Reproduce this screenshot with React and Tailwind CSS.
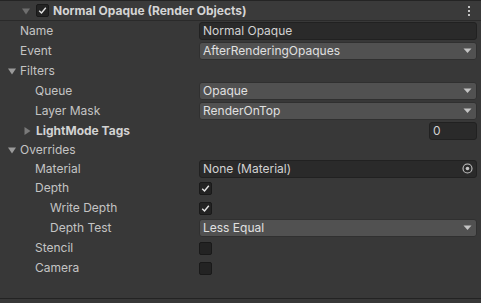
const font = { fontFamily: "Inter, 'Noto Sans', sans-serif" };

function Tri({ open = true, className = "" }) {
  return open ? (
    <svg width="8" height="8" viewBox="0 0 8 8" className={className}>
      <path d="M0 1.5 L8 1.5 L4 7.5 Z" fill="currentColor" />
    </svg>
  ) : (
    <svg width="8" height="8" viewBox="0 0 8 8" className={className}>
      <path d="M1.5 0 L7.5 4 L1.5 8 Z" fill="currentColor" />
    </svg>
  );
}

function Check({ on }) {
  return (
    <div className="w-[13px] h-[13px] rounded-[2px] bg-[#232323] border border-[#191919] flex items-center justify-center">
      {on && (
        <svg width="9" height="9" viewBox="0 0 9 9">
          <path d="M1.2 4.8 L3.5 7 L7.8 1.8" stroke="#e4e4e4" strokeWidth="1.4" fill="none" />
        </svg>
      )}
    </div>
  );
}

function TextField({ value }) {
  return (
    <div className="h-[18px] rounded-[3px] bg-[#2a2a2a] border border-[#212121] px-[3px] flex items-center text-[12px] text-[#d2d2d2]">
      {value}
    </div>
  );
}

function Dropdown({ value }) {
  return (
    <div className="h-[18px] rounded-[3px] bg-[#515151] border border-[#303030] pl-[3px] pr-[4px] flex items-center justify-between text-[12px] text-[#e0e0e0]">
      <span>{value}</span>
      <svg width="9" height="6" viewBox="0 0 9 6">
        <path d="M0.5 0.5 L8.5 0.5 L4.5 5 Z" fill="#c4c4c4" />
      </svg>
    </div>
  );
}

function Row({ h = "h-5", indent = "pl-5", label, children, bold, arrow }) {
  return (
    <div className={`${h} flex items-center`}>
      <div className={`w-[199px] ${indent} flex items-center text-[12px] ${bold ? "font-bold text-[#d2d2d2]" : "text-[#c4c4c4]"}`}>
        {arrow}
        {label}
      </div>
      <div className="flex-1 pr-[4px]">{children}</div>
    </div>
  );
}

export default function App() {
  return (
    <div style={font} className="w-[481px] h-[303px] bg-[#383838] border-t border-[#242424] overflow-hidden">
      {/* header */}
      <div className="h-[20px] bg-[#3a3a3a] border-b border-[#2a2a2a] flex items-center">
        <Tri className="ml-[22px] text-[#6e6e6e]" />
        <div className="ml-[6px]">
          <Check on />
        </div>
        <span className="ml-[4px] text-[12px] font-bold text-[#d4d4d4]">Normal Opaque (Render Objects)</span>
        <div className="ml-auto mr-[11px] flex flex-col gap-[2px]">
          <div className="w-[2px] h-[2px] bg-[#c4c4c4]" />
          <div className="w-[2px] h-[2px] bg-[#c4c4c4]" />
          <div className="w-[2px] h-[2px] bg-[#c4c4c4]" />
        </div>
      </div>

      <Row label="Name">
        <TextField value="Normal Opaque" />
      </Row>
      <Row label="Event">
        <Dropdown value="AfterRenderingOpaques" />
      </Row>
      <Row indent="pl-[8px]" label="Filters" arrow={<Tri className="mr-[4px] text-[#9a9a9a]" />} />
      <Row indent="pl-[35px]" label="Queue">
        <Dropdown value="Opaque" />
      </Row>
      <Row indent="pl-[35px]" label="Layer Mask">
        <Dropdown value="RenderOnTop" />
      </Row>
      <Row
        indent="pl-[23px]"
        label="LightMode Tags"
        bold
        arrow={<Tri open={false} className="mr-[5px] text-[#7a7a7a]" />}
      >
        <div className="flex justify-end">
          <div className="w-[48px]">
            <TextField value="0" />
          </div>
        </div>
      </Row>
      <Row h="h-[18px]" indent="pl-[8px]" label="Overrides" arrow={<Tri className="mr-[4px] text-[#9a9a9a]" />} />
      <Row h="h-[19px]" indent="pl-[35px]" label="Material">
        <div className="h-[18px] rounded-[3px] bg-[#2a2a2a] border border-[#212121] pl-[3px] flex items-center justify-between text-[12px] text-[#d2d2d2]">
          <span>None (Material)</span>
          <div className="w-[18px] h-full flex items-center justify-center">
            <svg width="11" height="11" viewBox="0 0 11 11">
              <circle cx="5.5" cy="5.5" r="4.5" stroke="#c4c4c4" strokeWidth="1.1" fill="none" />
              <circle cx="5.5" cy="5.5" r="1.8" fill="#c4c4c4" />
            </svg>
          </div>
        </div>
      </Row>
      <Row indent="pl-[35px]" label="Depth">
        <Check on />
      </Row>
      <Row indent="pl-[50px]" label="Write Depth">
        <Check on />
      </Row>
      <Row indent="pl-[50px]" label="Depth Test">
        <Dropdown value="Less Equal" />
      </Row>
      <Row indent="pl-[35px]" label="Stencil">
        <Check />
      </Row>
      <Row indent="pl-[35px]" label="Camera">
        <Check />
      </Row>
      <div className="h-[20px]" />
      <div className="h-px bg-[#232323]" />
    </div>
  );
}
